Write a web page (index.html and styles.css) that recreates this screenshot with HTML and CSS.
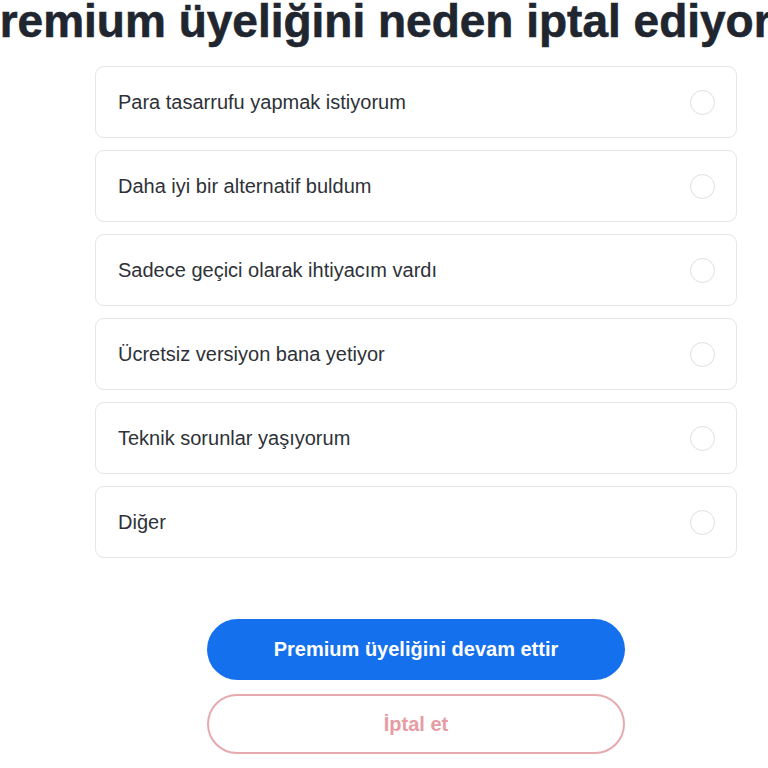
FILE: index.html
```html
<!DOCTYPE html>
<html lang="tr">
<head>
<meta charset="utf-8">
<link rel="stylesheet" href="styles.css">
</head>
<body>
<main class="page">
  <h1 class="title">Premium üyeliğini neden iptal ediyorsunuz?</h1>
  <div class="options">
    <label class="option"><span class="option-text">Para tasarrufu yapmak istiyorum</span><span class="radio"></span></label>
    <label class="option"><span class="option-text">Daha iyi bir alternatif buldum</span><span class="radio"></span></label>
    <label class="option"><span class="option-text">Sadece geçici olarak ihtiyacım vardı</span><span class="radio"></span></label>
    <label class="option"><span class="option-text">Ücretsiz versiyon bana yetiyor</span><span class="radio"></span></label>
    <label class="option"><span class="option-text">Teknik sorunlar yaşıyorum</span><span class="radio"></span></label>
    <label class="option"><span class="option-text">Diğer</span><span class="radio"></span></label>
  </div>
  <div class="actions">
    <button class="btn btn-primary">Premium üyeliğini devam ettir</button>
    <button class="btn btn-outline">İptal et</button>
  </div>
</main>
</body>
</html>
```

FILE: styles.css
```css
html, body {
  margin: 0;
  padding: 0;
  background: #ffffff;
  overflow: hidden;
}
body {
  font-family: "Liberation Sans", Arial, sans-serif;
  color: #2b2f36;
}
.page {
  width: 768px;
  height: 768px;
  display: flex;
  flex-direction: column;
}
.title {
  margin: -7px 0 0 -31px;
  font-size: 46px;
  line-height: 56px;
  font-weight: 700;
  white-space: nowrap;
  color: #1f2630;
  -webkit-text-stroke: 0.6px #1f2630;
}
.options {
  margin: 17px 31px 0 95px;
  display: flex;
  flex-direction: column;
  gap: 12px;
}
.option {
  height: 72px;
  box-sizing: border-box;
  border: 1px solid #e4e6ea;
  border-radius: 9px;
  display: flex;
  align-items: center;
  justify-content: space-between;
  padding: 0 21px 0 22px;
  background: #fff;
}
.option-text {
  font-size: 20px;
  color: #2e3238;
}
.radio {
  width: 25px;
  height: 25px;
  border: 1px solid #dcdfe3;
  border-radius: 50%;
  box-sizing: border-box;
}
.actions {
  margin: 61px 0 0 207px;
  width: 418px;
  display: flex;
  flex-direction: column;
  gap: 14px;
}
.btn {
  font-family: "Liberation Sans", Arial, sans-serif;
  font-weight: 700;
  font-size: 20px;
  border-radius: 999px;
  box-sizing: border-box;
  cursor: pointer;
}
.btn-primary {
  height: 61px;
  background: #1570ee;
  color: #ffffff;
  border: none;
}
.btn-outline {
  height: 60px;
  background: #fff;
  border: 2px solid #e6a9ae;
  color: #e79ca3;
}
```
